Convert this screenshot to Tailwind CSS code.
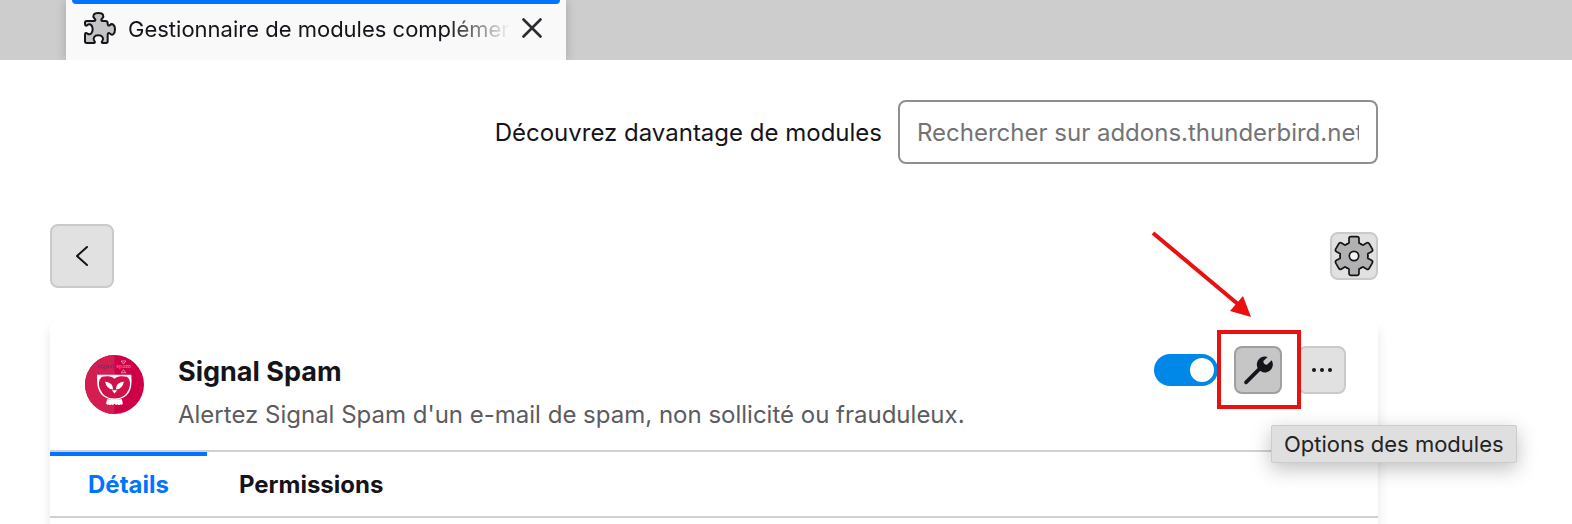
<!DOCTYPE html>
<html lang="fr">
<head>
    <meta charset="UTF-8">
    <meta name="viewport" content="width=device-width, initial-scale=1.0">
    <title>Gestionnaire de modules complémentaires</title>
    <script src="https://cdn.jsdelivr.net/npm/@tailwindcss/browser@4"></script>
</head>
<body class="flex flex-col h-screen overflow-hidden bg-white text-[#15141a] text-2xl font-['Inter',sans-serif]">
    <!-- Tab strip -->
    <header class="flex shrink-0 h-15 px-[66px] bg-[#cdcdcd] overflow-hidden">
        <div class="flex flex-col w-[500px] px-1.5 bg-[#f9f9f9] shadow-[0_0_10px_rgba(0,0,0,0.2)]">
            <div class="h-1 rounded-b-sm bg-[#0074ff]"></div>
            <div class="flex items-center h-12 pl-3 pr-[18px]">
                <svg class="size-8 shrink-0" viewBox="0 0 96 96" fill="#c4c4c6" stroke="#15141a" stroke-width="6" stroke-linejoin="round">
                    <path d="M8 27H30C36 27 35 22 31 19C25 12 28 3 43 3C58 3 61 12 55 19C51 22 50 27 56 27H64Q71 27 71 34V36C71 41 75 42 78 39C84 33 93 38 93 52C93 67 84 72 78 65C75 62 71 63 71 68V88Q71 93 66 93H57C53 93 52 90 55 87C60 79 56 70 43 70C30 70 26 79 31 87C34 90 33 93 29 93H8Q3 93 3 88V68C3 62 7 62 10 65C18 70 26 65 26 52C26 39 18 34 10 39C7 42 3 42 3 36V32Q3 27 8 27Z"/>
                </svg>
                <span class="flex-1 ml-3 pt-1 text-[22px] whitespace-nowrap overflow-hidden [mask-image:linear-gradient(to_right,black_84%,transparent)]">Gestionnaire de modules complémentaires</span>
                <button class="ml-3 shrink-0" aria-label="Fermer l'onglet">
                    <svg class="size-5" viewBox="0 0 20 20" stroke="#2b2b30" stroke-width="2.6" stroke-linecap="round"><path d="M1.5 1.5L18.5 18.5M18.5 1.5L1.5 18.5"/></svg>
                </button>
            </div>
        </div>
    </header>

    <main class="flex flex-col flex-1 w-full max-w-[1378px] pl-[50px] pt-10">
        <div class="flex shrink-0 items-center justify-end gap-4">
            <label for="search" class="pt-0.5">Découvrez davantage de modules</label>
            <input id="search" type="text" placeholder="Rechercher sur addons.thunderbird.net" class="w-[480px] h-16 px-[17px] border-2 border-[#8f8f91] rounded-lg placeholder:text-[#737375]">
        </div>

        <div class="flex shrink-0 items-center justify-between mt-15">
            <button class="flex items-center justify-center size-16 border-2 border-[#cacaca] rounded-lg bg-[#e1e1e1]" aria-label="Retour">
                <svg class="w-3 h-5" viewBox="0 0 12 20" fill="none" stroke="#15141a" stroke-width="2" stroke-linecap="round" stroke-linejoin="round"><path d="M11 1L1 10L11 19"/></svg>
            </button>
            <button class="size-12 border-2 border-[#cacaca] rounded-lg bg-[#e1e1e1]" aria-label="Outils">
                <svg class="size-11" viewBox="-66 -66 132 132" fill="#b1b1b1">
                    <circle r="41"/>
                    <g stroke="#15141a" stroke-width="5" stroke-linejoin="round" stroke-linecap="round">
                        <path id="tooth" d="M-21-36L-15-39V-52Q-15-58-9-58H9Q15-58 15-52V-39L21-36"/>
                        <use href="#tooth" transform="rotate(60)"/>
                        <use href="#tooth" transform="rotate(120)"/>
                        <use href="#tooth" transform="rotate(180)"/>
                        <use href="#tooth" transform="rotate(240)"/>
                        <use href="#tooth" transform="rotate(300)"/>
                        <circle r="14" fill="#f4f4f4"/>
                    </g>
                </svg>
            </button>
        </div>

        <section class="flex flex-col flex-1 mt-8 rounded-t-lg bg-white shadow-[0_8px_12px_rgba(0,0,0,0.1)]">
            <div class="flex shrink-0 items-start h-33 pl-[35px] pr-8 border-b-2 border-[#cfcfd4]">
                <svg class="mt-[35px] size-[59px]" viewBox="0 0 176 176">
                    <circle cx="88" cy="88" r="88" fill="#d00048"/>
                    <path d="M88 0A88 88 0 0 0 88 176Z" fill="#d41d50"/>
                    <g font-family="Liberation Serif, serif" font-size="21">
                        <text x="36" y="40" fill="#4b3a80">signal</text>
                        <text x="93" y="40" fill="#e58aa8">spam</text>
                    </g>
                    <path d="M108 18H122L115 27ZM108 53H122L115 44Z" fill="none" stroke="#f5c3d2" stroke-width="2"/>
                    <path d="M36 59H138C142 100 134 130 88 134C42 130 34 100 36 59Z" fill="#fff"/>
                    <path d="M88 71C78 62 62 63 51 65C39 73 40 92 46 104C54 122 68 130 88 130C108 130 122 122 130 104C136 92 137 73 125 65C114 63 98 62 88 71Z" fill="#d11149"/>
                    <path d="M60 79Q84 82 84 103Q64 102 60 79ZM116 79Q92 82 92 103Q112 102 116 79ZM80 105H96L88 115Z" fill="#fff"/>
                    <path d="M66 132H110L113 145Q109 151 105 147Q101 152 97 147Q92 152 88 145Q84 152 79 147Q75 152 71 147Q67 151 63 145Z" fill="#fff"/>
                </svg>
                <div class="flex-1 ml-[34px] mt-8">
                    <h1 class="text-[27px] leading-10 font-bold">Signal Spam</h1>
                    <p class="mt-[5px] leading-9 text-[#5b5b60]">Alertez Signal Spam d'un e-mail de spam, non sollicité ou frauduleux.</p>
                </div>
                <div class="flex items-center gap-4 mt-[26px]">
                    <input type="checkbox" checked aria-label="Activer" class="appearance-none w-16 h-8 rounded-full bg-[#0088e8] after:block after:size-6 after:mt-1 after:ml-9 after:rounded-full after:bg-white">
                    <div class="relative z-10">
                        <button class="block size-12 border-2 border-[#9f9f9f] rounded-lg bg-[#c6c6c6]" aria-label="Options des modules" aria-describedby="tip">
                            <svg class="size-11" viewBox="6 6 132 132" fill="#15141a">
                                <path d="M36 109L78 67" stroke="#15141a" stroke-width="11" stroke-linecap="round"/>
                                <path d="M101 33L88 45Q88 56 99 56L113 43A24 24 0 1 1 101 33Z"/>
                            </svg>
                        </button>
                        <!-- Highlight frame and arrow -->
                        <div class="absolute -left-[17px] -right-[19px] -top-4 -bottom-[15px] border-4 border-[#e81010] pointer-events-none"></div>
                        <svg class="absolute -left-[83px] -top-[116px] w-[102px] h-[88px]" viewBox="0 0 102 88">
                            <path d="M2 3L88 75" stroke="#e81010" stroke-width="4"/>
                            <path d="M100 87L79 81L92 66Z" fill="#e81010"/>
                        </svg>
                        <div id="tip" role="tooltip" class="absolute left-[37px] top-[79px] px-3 py-1 border border-[#cccccc] rounded-xs bg-[#dfdfdf] text-[22px] leading-7 whitespace-nowrap text-[#232323] shadow-[0_6px_20px_rgba(0,0,0,0.25)]">Options des modules</div>
                    </div>
                    <button class="flex items-center justify-center size-12 border-2 border-[#cacaca] rounded-lg bg-[#e1e1e1]" aria-label="Plus d'options">
                        <svg class="w-5 h-1" viewBox="0 0 20 4" fill="#15141a"><circle cx="2" cy="2" r="2"/><circle cx="10" cy="2" r="2"/><circle cx="18" cy="2" r="2"/></svg>
                    </button>
                </div>
            </div>
            <nav class="flex shrink-0 h-[66px] border-b-2 border-[#cfcfd4] font-bold">
                <button class="px-[38px] border-t-4 border-[#0074ff] pb-0.5 text-[#0074ff]">Détails</button>
                <button class="px-8 border-t-4 border-transparent pb-0.5">Permissions</button>
            </nav>
        </section>
    </main>
</body>
</html>
